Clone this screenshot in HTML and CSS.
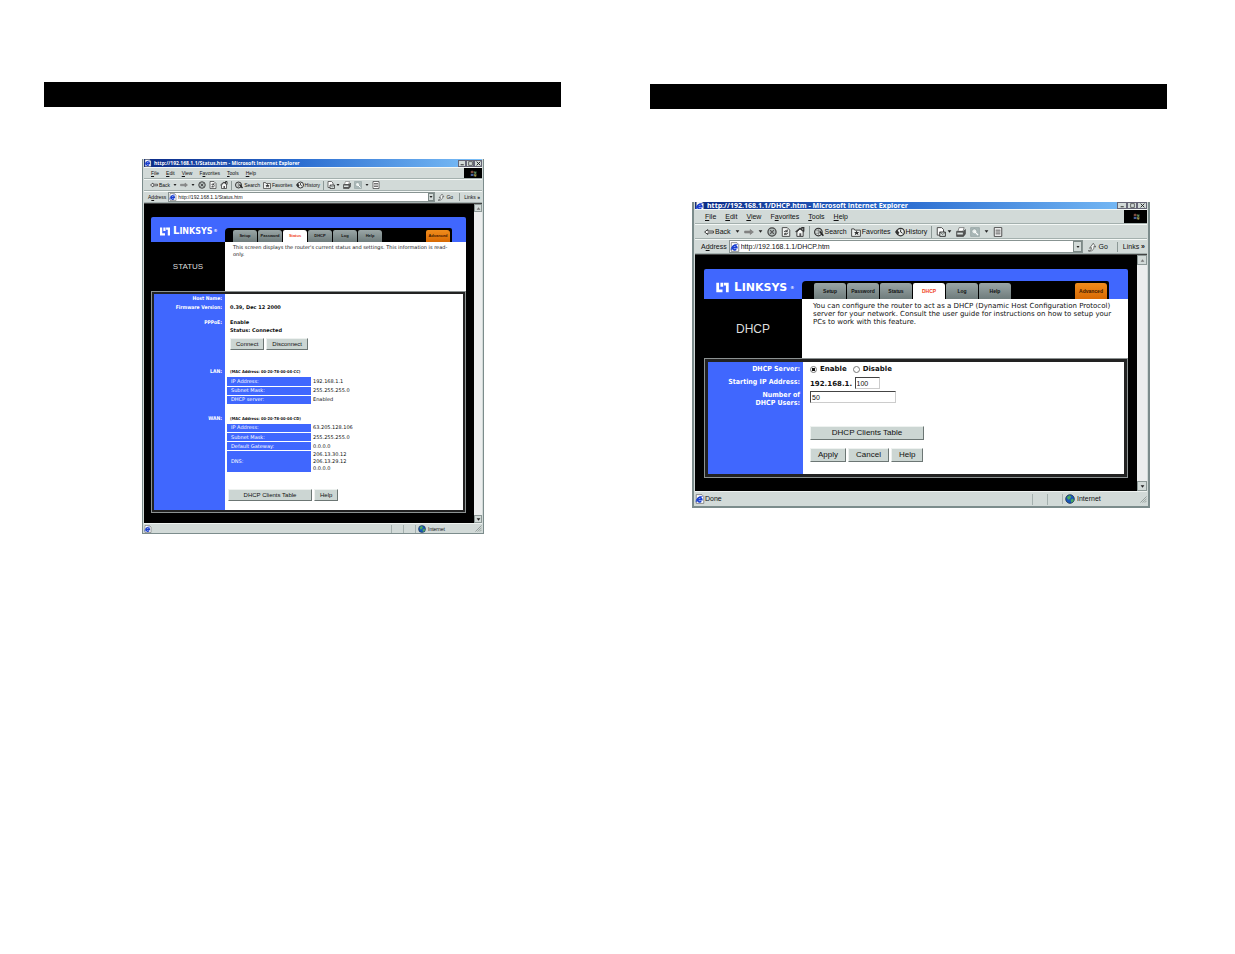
FILE: index.html
```html
<!DOCTYPE html>
<html lang="en">
  <head>
    <meta charset="UTF-8" />
    <meta name="viewport" content="width=device-width, initial-scale=1.0" />
    <title>Linksys Router - Status and DHCP</title>
    <link rel="stylesheet" href="styles.css">
  </head>
  <body>
    <svg class="sprite" aria-hidden="true">
      <symbol id="i-ie" viewBox="0 0 16 16">
        <path d="M2 1h9l3 3v11H2z" fill="#fff" stroke="#555" />
        <path d="M4 9h7a3.5 3.5 0 1 0-1 2.6" fill="none" stroke="#1a3fd0" stroke-width="2.5" />
        <path d="M2 13C1 8 7 3 12 4" fill="none" stroke="#1a3fd0" stroke-width="1.5" />
      </symbol>
      <symbol id="i-back" viewBox="0 0 16 16"><path d="M1 8l5-4v2.5h9v3H6V12z" fill="#fff" stroke="#333" stroke-width="1.5" /></symbol>
      <symbol id="i-forward" viewBox="0 0 16 16"><path d="M15 8l-5-4v2.5H1v3h9V12z" fill="#888" stroke="#777" /></symbol>
      <symbol id="i-stop" viewBox="0 0 16 16">
        <circle cx="8" cy="8" r="6.5" fill="#b4bebc" stroke="#444" stroke-width="2" />
        <path d="M5 5l6 6M11 5l-6 6" stroke="#555" stroke-width="2" />
      </symbol>
      <symbol id="i-refresh" viewBox="0 0 16 16">
        <path d="M2 1h8l4 4v10H2z" fill="#f4f6f5" stroke="#444" stroke-width="1.5" />
        <path d="M5 8a3 3 0 0 1 5-1M11 9a3 3 0 0 1-5 2M10 4v3H7M6 13v-3h3" fill="none" stroke="#333" stroke-width="1.5" />
      </symbol>
      <symbol id="i-home" viewBox="0 0 16 16">
        <path d="M1 8l7-6 6 6M11 4V1h3v6" fill="none" stroke="#333" stroke-width="2" />
        <path d="M3 8v7h10V7L8 3z" fill="#f4f6f5" stroke="#333" stroke-width="1.5" /><path d="M7 10h3v5H7z" fill="#555" />
      </symbol>
      <symbol id="i-search" viewBox="0 0 16 16">
        <circle cx="7" cy="8" r="6" fill="#dfe6e4" stroke="#333" stroke-width="2" />
        <path d="M3 6h8M3 10h6M7 2v12" stroke="#666" /><path d="M9 7l6 7" stroke="#222" stroke-width="2.5" />
      </symbol>
      <symbol id="i-favorites" viewBox="0 0 16 16">
        <path d="M1 3h4l1 2h9v10H1z" fill="#eef1f0" stroke="#444" stroke-width="1.5" />
        <path d="M9 5l1 3h3l-2 2 1 3-3-2-3 2 1-3-2-2h3z" fill="#333" />
      </symbol>
      <symbol id="i-history" viewBox="0 0 16 16">
        <circle cx="9" cy="8" r="6" fill="#eef1f0" stroke="#333" stroke-width="2" />
        <path d="M9 4v4l3 2" fill="none" stroke="#222" stroke-width="1.5" /><path d="M0 8l3-4 4 5-3 4z" fill="#333" />
      </symbol>
      <symbol id="i-mail" viewBox="0 0 16 16">
        <path d="M2 1h7l3 3v9H2z" fill="#fff" stroke="#444" stroke-width="1.5" />
        <path d="M6 8h9v7H6z" fill="#d8e0de" stroke="#333" stroke-width="1.5" /><path d="M6 8l5 4 4-4" fill="none" stroke="#333" />
      </symbol>
      <symbol id="i-print" viewBox="0 0 16 16">
        <path d="M5 1h8l-2 6H3z" fill="#fff" stroke="#555" />
        <path d="M1 7h11l3-3v7l-3 4H1z" fill="#555" stroke="#333" /><path d="M2 9h9v3H2z" fill="#d8e0de" />
      </symbol>
      <symbol id="i-edit" viewBox="0 0 16 16">
        <path d="M1 1h14v14H1z" fill="#aab8b8" stroke="#8a9898" />
        <circle cx="7" cy="7" r="4" fill="#e8eeec" stroke="#849494" /><path d="M7 7l6 6" stroke="#fff" stroke-width="2" />
      </symbol>
      <symbol id="i-discuss" viewBox="0 0 16 16">
        <path d="M2 1h12v14H2z" fill="#fff" stroke="#444" stroke-width="1.5" />
        <path d="M4 5h8M4 8h8M4 11h8" stroke="#444" stroke-width="1.5" />
      </symbol>
      <symbol id="i-go" viewBox="0 0 16 16">
        <path d="M2 14c2 1 6-1 5-5l-3 1 6-8 4 6-3-1c1 6-5 9-9 7z" fill="#f4f6f5" stroke="#333" />
      </symbol>
      <symbol id="i-globe" viewBox="0 0 16 16">
        <circle cx="8" cy="8" r="7" fill="#1a56b8" stroke="#123" />
        <path d="M3 5l4-3 3 2-2 4-3 1zM9 9l4-2 1 4-4 3z" fill="#4aa85c" />
      </symbol>
      <symbol id="i-flag" viewBox="0 0 20 16">
        <path d="M6 4c2-1 3-1 5 0v4c-2-1-3-1-5 0z" fill="#7d4a3c" /><path d="M12 4c2 1 3 1 4 0v4c-1 1-2 1-4 0z" fill="#5f8a5c" />
        <path d="M6 9c2-1 3-1 5 0v4c-2-1-3-1-5 0z" fill="#48639c" /><path d="M12 9c2 1 3 1 4 0v4c-1 1-2 1-4 0z" fill="#9c9448" />
      </symbol>
      <symbol id="i-linksys" viewBox="0 0 18 16">
        <path d="M0 1h4v10h5v4H0zM6 1h4v6H6zM11 1h7v14h-4V5h-3z" fill="#fff" />
      </symbol>
      <symbol id="i-down" viewBox="0 0 8 8"><path d="M1 2h6L4 6z" fill="#222" /></symbol>
      <symbol id="i-up" viewBox="0 0 8 8"><path d="M1 6h6L4 2z" fill="#777" /></symbol>
      <symbol id="i-grip" viewBox="0 0 16 16"><path d="M15 1L1 15M15 6l-9 9M15 11l-4 4" stroke="#77827f" stroke-width="1.5" /></symbol>
      <symbol id="i-min" viewBox="0 0 8 8"><path d="M1 6h5" stroke="#222" stroke-width="1.5" /></symbol>
      <symbol id="i-max" viewBox="0 0 8 8"><path d="M1 1h6v6H1z" fill="none" stroke="#222" /></symbol>
      <symbol id="i-close" viewBox="0 0 8 8"><path d="M1 1l6 6M7 1L1 7" stroke="#222" stroke-width="1.5" /></symbol>
    </svg>

    <main class="spread">
      <section class="sheet">
        <div class="sheet-bar"></div>

        <div class="browser browser-status">
          <div class="title-bar">
            <svg class="icon"><use href="#i-ie" /></svg>
            <span class="title">http://192.168.1.1/Status.htm - Microsoft Internet Explorer</span>
            <button class="win-button" aria-label="Minimize"><svg><use href="#i-min" /></svg></button>
            <button class="win-button" aria-label="Maximize"><svg><use href="#i-max" /></svg></button>
            <button class="win-button" aria-label="Close"><svg><use href="#i-close" /></svg></button>
          </div>
          <div class="menu-bar">
            <button><u>F</u>ile</button>
            <button><u>E</u>dit</button>
            <button><u>V</u>iew</button>
            <button>F<u>a</u>vorites</button>
            <button><u>T</u>ools</button>
            <button><u>H</u>elp</button>
            <span class="throbber"><svg><use href="#i-flag" /></svg></span>
          </div>
          <div class="tool-bar">
            <button><svg class="icon"><use href="#i-back" /></svg>Back</button>
            <svg class="arrow"><use href="#i-down" /></svg>
            <button aria-label="Forward"><svg class="icon"><use href="#i-forward" /></svg></button>
            <svg class="arrow"><use href="#i-down" /></svg>
            <button aria-label="Stop"><svg class="icon"><use href="#i-stop" /></svg></button>
            <button aria-label="Refresh"><svg class="icon"><use href="#i-refresh" /></svg></button>
            <button aria-label="Home"><svg class="icon"><use href="#i-home" /></svg></button>
            <span class="divider"></span>
            <button><svg class="icon"><use href="#i-search" /></svg>Search</button>
            <button><svg class="icon"><use href="#i-favorites" /></svg>Favorites</button>
            <button><svg class="icon"><use href="#i-history" /></svg>History</button>
            <span class="divider"></span>
            <button aria-label="Mail"><svg class="icon"><use href="#i-mail" /></svg><svg class="arrow"><use href="#i-down" /></svg></button>
            <button aria-label="Print"><svg class="icon"><use href="#i-print" /></svg></button>
            <button aria-label="Edit"><svg class="icon"><use href="#i-edit" /></svg></button>
            <svg class="arrow"><use href="#i-down" /></svg>
            <button aria-label="Discuss"><svg class="icon"><use href="#i-discuss" /></svg></button>
          </div>
          <div class="address-bar">
            <label for="statusUrl">A<u>d</u>dress</label>
            <div class="address-box">
              <svg class="icon"><use href="#i-ie" /></svg>
              <input type="text" id="statusUrl" value="http://192.168.1.1/Status.htm" />
              <button class="drop" aria-label="Show addresses"><svg><use href="#i-down" /></svg></button>
            </div>
            <button class="go"><svg class="icon"><use href="#i-go" /></svg>Go</button>
            <span class="links">Links <b>»</b></span>
          </div>

          <div class="viewport">
            <div class="page">
              <header class="banner">
                <div class="brand"><svg><use href="#i-linksys" /></svg><span>L<small>INKSYS</small></span><sup>®</sup></div>
                <nav class="tabs">
                  <a href="#">Setup</a>
                  <a href="#">Password</a>
                  <a href="#" class="active">Status</a>
                  <a href="#">DHCP</a>
                  <a href="#">Log</a>
                  <a href="#">Help</a>
                  <a href="#" class="advanced">Advanced</a>
                </nav>
              </header>
              <div class="intro">
                <h1>STATUS</h1>
                <p>This screen displays the router's current status and settings. This information is read-only.</p>
              </div>
              <div class="panel">
                <div class="row">
                  <div class="name">Host Name:</div>
                  <div class="value"></div>
                </div>
                <div class="row row-firmware">
                  <div class="name">Firmware Version:</div>
                  <div class="value">0.39, Dec 12 2000</div>
                </div>
                <div class="row row-pppoe">
                  <div class="name">PPPoE:</div>
                  <div class="value">
                    <div>Enable</div>
                    <div>Status: Connected</div>
                    <div class="actions"><button>Connect</button><button>Disconnect</button></div>
                  </div>
                </div>
                <div class="row row-lan">
                  <div class="name">LAN:</div>
                  <div class="value">
                    <div class="mac">(MAC Address: 00-20-78-00-04-CC)</div>
                    <table>
                      <tr><th scope="row">IP Address:</th><td>192.168.1.1</td></tr>
                      <tr><th scope="row">Subnet Mask:</th><td>255.255.255.0</td></tr>
                      <tr><th scope="row">DHCP server:</th><td>Enabled</td></tr>
                    </table>
                  </div>
                </div>
                <div class="row row-wan">
                  <div class="name">WAN:</div>
                  <div class="value">
                    <div class="mac">(MAC Address: 00-20-78-00-04-CD)</div>
                    <table>
                      <tr><th scope="row">IP Address:</th><td>63.205.128.106</td></tr>
                      <tr><th scope="row">Subnet Mask:</th><td>255.255.255.0</td></tr>
                      <tr><th scope="row">Default Gateway:</th><td>0.0.0.0</td></tr>
                      <tr><th scope="row">DNS:</th><td>206.13.30.12<br>206.13.29.12<br>0.0.0.0</td></tr>
                    </table>
                  </div>
                </div>
                <div class="row row-buttons">
                  <div class="name"></div>
                  <div class="value">
                    <div class="actions"><button class="wide">DHCP Clients Table</button><button>Help</button></div>
                  </div>
                </div>
              </div>
            </div>
            <div class="scrollbar">
              <button aria-label="Scroll up"><svg><use href="#i-up" /></svg></button>
              <button aria-label="Scroll down"><svg><use href="#i-down" /></svg></button>
            </div>
          </div>

          <div class="status-bar">
            <svg class="icon"><use href="#i-ie" /></svg>
            <span class="message"></span>
            <span class="cell"></span>
            <span class="cell"></span>
            <span class="zone"><svg class="icon"><use href="#i-globe" /></svg>Internet</span>
            <svg class="grip"><use href="#i-grip" /></svg>
          </div>
        </div>
      </section>

      <section class="sheet sheet-right">
        <div class="sheet-bar"></div>

        <div class="browser browser-dhcp">
          <div class="title-bar">
            <svg class="icon"><use href="#i-ie" /></svg>
            <span class="title">http://192.168.1.1/DHCP.htm - Microsoft Internet Explorer</span>
            <button class="win-button" aria-label="Minimize"><svg><use href="#i-min" /></svg></button>
            <button class="win-button" aria-label="Maximize"><svg><use href="#i-max" /></svg></button>
            <button class="win-button" aria-label="Close"><svg><use href="#i-close" /></svg></button>
          </div>
          <div class="menu-bar">
            <button><u>F</u>ile</button>
            <button><u>E</u>dit</button>
            <button><u>V</u>iew</button>
            <button>F<u>a</u>vorites</button>
            <button><u>T</u>ools</button>
            <button><u>H</u>elp</button>
            <span class="throbber"><svg><use href="#i-flag" /></svg></span>
          </div>
          <div class="tool-bar">
            <button><svg class="icon"><use href="#i-back" /></svg>Back</button>
            <svg class="arrow"><use href="#i-down" /></svg>
            <button aria-label="Forward"><svg class="icon"><use href="#i-forward" /></svg></button>
            <svg class="arrow"><use href="#i-down" /></svg>
            <button aria-label="Stop"><svg class="icon"><use href="#i-stop" /></svg></button>
            <button aria-label="Refresh"><svg class="icon"><use href="#i-refresh" /></svg></button>
            <button aria-label="Home"><svg class="icon"><use href="#i-home" /></svg></button>
            <span class="divider"></span>
            <button><svg class="icon"><use href="#i-search" /></svg>Search</button>
            <button><svg class="icon"><use href="#i-favorites" /></svg>Favorites</button>
            <button><svg class="icon"><use href="#i-history" /></svg>History</button>
            <span class="divider"></span>
            <button aria-label="Mail"><svg class="icon"><use href="#i-mail" /></svg><svg class="arrow"><use href="#i-down" /></svg></button>
            <button aria-label="Print"><svg class="icon"><use href="#i-print" /></svg></button>
            <button aria-label="Edit"><svg class="icon"><use href="#i-edit" /></svg></button>
            <svg class="arrow"><use href="#i-down" /></svg>
            <button aria-label="Discuss"><svg class="icon"><use href="#i-discuss" /></svg></button>
          </div>
          <div class="address-bar">
            <label for="dhcpUrl">A<u>d</u>dress</label>
            <div class="address-box">
              <svg class="icon"><use href="#i-ie" /></svg>
              <input type="text" id="dhcpUrl" value="http://192.168.1.1/DHCP.htm" />
              <button class="drop" aria-label="Show addresses"><svg><use href="#i-down" /></svg></button>
            </div>
            <button class="go"><svg class="icon"><use href="#i-go" /></svg>Go</button>
            <span class="links">Links <b>»</b></span>
          </div>

          <div class="viewport">
            <div class="page">
              <header class="banner">
                <div class="brand"><svg><use href="#i-linksys" /></svg><span>L<small>INKSYS</small></span><sup>®</sup></div>
                <nav class="tabs">
                  <a href="#">Setup</a>
                  <a href="#">Password</a>
                  <a href="#">Status</a>
                  <a href="#" class="active">DHCP</a>
                  <a href="#">Log</a>
                  <a href="#">Help</a>
                  <a href="#" class="advanced">Advanced</a>
                </nav>
              </header>
              <div class="intro">
                <h1>DHCP</h1>
                <p>You can configure the router to act as a DHCP (Dynamic Host Configuration Protocol) server for your network. Consult the user guide for instructions on how to setup your PCs to work with this feature.</p>
              </div>
              <form class="panel">
                <div class="row row-server">
                  <div class="name">DHCP Server:</div>
                  <div class="value radios">
                    <input type="radio" id="enable" name="dhcp" checked /><label for="enable">Enable</label>
                    <input type="radio" id="disable" name="dhcp" /><label for="disable">Disable</label>
                  </div>
                </div>
                <div class="row row-start">
                  <label class="name" for="startIp">Starting IP Address:</label>
                  <div class="value">192.168.1. <input class="field field-short" type="text" id="startIp" value="100" /></div>
                </div>
                <div class="row row-users">
                  <label class="name" for="users">Number of<br>DHCP Users:</label>
                  <div class="value"><input class="field" type="text" id="users" value="50" /></div>
                </div>
                <div class="row row-buttons">
                  <div class="name"></div>
                  <div class="value">
                    <div class="actions"><button type="button" class="wide">DHCP Clients Table</button></div>
                    <div class="actions"><button type="button">Apply</button><button type="button">Cancel</button><button type="button">Help</button></div>
                  </div>
                </div>
              </form>
            </div>
            <div class="scrollbar">
              <button aria-label="Scroll up"><svg><use href="#i-up" /></svg></button>
              <button aria-label="Scroll down"><svg><use href="#i-down" /></svg></button>
            </div>
          </div>

          <div class="status-bar">
            <svg class="icon"><use href="#i-ie" /></svg>
            <span class="message">Done</span>
            <span class="cell"></span>
            <span class="cell"></span>
            <span class="zone"><svg class="icon"><use href="#i-globe" /></svg>Internet</span>
            <svg class="grip"><use href="#i-grip" /></svg>
          </div>
        </div>
      </section>
    </main>
  </body>
</html>
```

FILE: styles.css
```css
* {
  margin: 0;
  padding: 0;
  box-sizing: border-box;
}

body {
  font-family: 'Liberation Sans', Arial, sans-serif;
  background-color: #fff;
  color: #111;
}
button,
input {
  font: inherit;
  color: inherit;
  background: none;
  border: none;
}
button {
  white-space: nowrap;
}
svg {
  display: block;
  flex: none;
}
.sprite {
  display: none;
}

.spread {
  display: grid;
  grid-template-columns: 1fr 1fr;
  gap: 89px;
  padding: 82px 68px 40px 44px;
}
.sheet-bar {
  height: 25px;
  background-color: #000;
}
.sheet-right {
  padding-top: 2px;
}

/* sizes shared by everything inside a browser window */
.browser-status {
  --text: 5px;
  --line: 8px;
  --icon: 8px;
  --side: 74px;
  --arrow: 4px;
  margin: 52px 77px 0 98px;
}
.browser-dhcp {
  --text: 7px;
  --line: 10px;
  --icon: 10px;
  --side: 98px;
  --arrow: 5px;
  margin: 93px 17px 0 42px;
}
.browser {
  font-size: var(--text);
  line-height: var(--line);
  background-color: #d2dad8;
  border: solid #7c8c8c;
  border-width: 0 1px 1px;
  padding: 0 1px;
}
.icon {
  width: var(--icon);
  height: var(--icon);
}
.arrow {
  width: var(--arrow);
  height: var(--arrow);
}

.title-bar {
  display: flex;
  align-items: center;
  height: 8px;
  overflow: hidden;
  color: #fff;
  font-family: 'Open Sans', sans-serif;
  font-weight: bold;
  background: linear-gradient(90deg, #0c2a86, #2a6cd0 45%, #7cc0f8);
}
.title {
  flex: 1;
  margin-left: 2px;
  white-space: nowrap;
}
.win-button {
  display: grid;
  place-items: center;
  width: 8px;
  height: 7px;
  background-color: #d2dad8;
  border: 1px solid #667;
}
.win-button svg {
  width: 5px;
  height: 5px;
}

.menu-bar,
.tool-bar,
.address-bar {
  display: flex;
  align-items: center;
  border-top: 1px solid #f4f8f6;
  border-bottom: 1px solid #a4b0ae;
}
.menu-bar {
  height: 12px;
  padding-left: 7px;
  gap: 7px;
}
.throbber {
  margin-left: auto;
  align-self: stretch;
  display: grid;
  place-items: center;
  width: 18px;
  background-color: #000;
}
.throbber svg {
  width: 12px;
  height: 9px;
}
.tool-bar {
  height: 12px;
  padding-left: 6px;
  gap: 3px;
}
.tool-bar button {
  display: flex;
  align-items: center;
  gap: 1px;
}
.divider {
  width: 1px;
  height: 9px;
  background-color: #8c9896;
}
.address-bar {
  height: 12px;
  padding-left: 4px;
  gap: 2px;
}
.address-box {
  flex: 1;
  display: flex;
  align-items: center;
  gap: 1px;
  height: 100%;
  background-color: #fff;
  border: 1px solid #889492;
}
.address-box input {
  flex: 1;
  min-width: 0;
}
.drop {
  display: grid;
  place-items: center;
  width: 6px;
  height: 100%;
  background-color: #d2dad8;
  border: 1px solid #7c8886;
}
.drop svg {
  width: 4px;
  height: 4px;
}
.go {
  display: flex;
  align-items: center;
  gap: 1px;
}
.links {
  margin-left: 4px;
  padding: 0 2px 0 4px;
  border-left: 1px solid #8c9896;
}

.viewport {
  display: flex;
  border-top: 1px solid #444;
}
.page {
  flex: 1;
  padding: 13px 8px 10px 7px;
  background-color: #000;
}
.scrollbar {
  display: flex;
  flex-direction: column;
  justify-content: space-between;
  width: 8px;
  background-color: #eceeee;
}
.scrollbar button {
  display: grid;
  place-items: center;
  height: 8px;
  background-color: #d2dad8;
  border: 1px solid #8c9896;
}
.scrollbar svg {
  width: 5px;
  height: 5px;
}

.banner {
  display: flex;
  align-items: flex-end;
  height: 25px;
  padding-right: 14px;
  background-color: #4067fe;
  border-radius: 2px 2px 0 0;
}
.brand {
  display: flex;
  align-items: center;
  align-self: stretch;
  width: var(--side);
  padding: 3px 0 0 9px;
  gap: 3px;
  color: #fff;
  font-size: 10px;
  font-weight: bold;
  font-family: 'DejaVu Sans', sans-serif;
}
.brand svg {
  width: 10px;
  height: 9px;
}
.brand small {
  font-size: 8px;
}
.brand sup {
  font-size: 4px;
  margin-left: -2px;
}
.tabs {
  flex: 1;
  display: flex;
  gap: 1px;
  padding: 2px 2px 0 8px;
  background-color: #000;
  border-radius: 4px 2px 0 0;
}
.tabs a {
  width: 24px;
  height: 12px;
  line-height: 12px;
  text-align: center;
  font-size: 4px;
  font-weight: bold;
  color: #111;
  text-decoration: none;
  background: linear-gradient(#9aa6a6, #6f7c7c);
  border-radius: 2px 3px 0 0;
}
.tabs .active {
  color: #f0431c;
  background: #fff;
}
.tabs .advanced {
  margin-left: auto;
  color: #401800;
  background: linear-gradient(#f08c1c, #d86a04);
}

.intro {
  display: flex;
  height: 49px;
}
.intro h1 {
  display: grid;
  place-items: center;
  width: var(--side);
  font-size: 8px;
  font-weight: normal;
  color: #ddd;
}
.intro p {
  flex: 1;
  padding: 2px 12px 0 8px;
  line-height: 7px;
  background-color: #fff;
  font-family: 'DejaVu Sans', sans-serif;
}

.panel {
  background: linear-gradient(90deg, #4067fe calc(var(--side) - 3px), #fff 0);
  border: 3px solid #222;
  outline: 1px solid #8c9292;
  outline-offset: -1px;
  font-family: 'DejaVu Sans', sans-serif;
}
.row {
  display: grid;
  grid-template-columns: calc(var(--side) - 3px) 1fr;
}
.name {
  padding-right: 3px;
  text-align: right;
  font-family: 'DejaVu Sans Condensed', 'DejaVu Sans', sans-serif;
  font-weight: bold;
  color: #fff;
  white-space: nowrap;
}
.value {
  padding-left: 5px;
  font-weight: bold;
}
.row-firmware {
  padding-top: 1px;
}
.row-pppoe {
  padding-top: 7px;
}
.row-lan {
  padding-top: 17px;
}
.row-wan {
  padding-top: 9px;
}
.mac {
  font-family: 'DejaVu Sans Condensed', 'DejaVu Sans', sans-serif;
  font-size: 4px;
  line-height: 10px;
}
table {
  margin-left: -3px;
  border-collapse: collapse;
  font-weight: normal;
}
th,
td {
  height: 9px;
  line-height: 7px;
  border-bottom: 1px solid #fff;
}
th {
  width: 84px;
  padding-left: 4px;
  text-align: left;
  font-weight: normal;
  color: #fff;
  background-color: #4067fe;
}
td {
  padding-left: 2px;
}
.actions {
  display: flex;
  gap: 2px;
}
.actions button {
  height: 12px;
  padding: 0 5px;
  font-family: 'Liberation Sans', Arial, sans-serif;
  font-size: 6px;
  font-weight: normal;
  background-color: #ccd6d3;
  border: 1px solid;
  border-color: #eef2f0 #6c7674 #6c7674 #eef2f0;
}
.row-pppoe .actions {
  margin-top: 4px;
}
.browser-status .row-buttons {
  padding: 16px 0 9px;
}
.browser-status .row-buttons .value {
  padding-left: 3px;
}
.browser-status .wide {
  width: 84px;
}

.status-bar {
  display: flex;
  align-items: center;
  height: 10px;
  border-top: 1px solid #eef2f0;
}
.message {
  flex: 1;
}
.cell {
  width: 12px;
  height: 8px;
  border-left: 1px solid #a4b0ae;
}
.zone {
  display: flex;
  align-items: center;
  gap: 2px;
  width: 60px;
  padding-left: 2px;
  border-left: 1px solid #a4b0ae;
}
.grip {
  width: 7px;
  height: 7px;
}

/* the DHCP window is drawn a third larger */
.browser-dhcp {
  border-width: 0 2px 2px;
}
.browser-dhcp .title-bar {
  height: 7px;
}
.browser-dhcp .win-button {
  width: 10px;
}
.browser-dhcp .menu-bar {
  height: 15px;
  padding-left: 10px;
  gap: 9px;
}
.browser-dhcp .throbber {
  width: 23px;
}
.browser-dhcp .tool-bar {
  height: 15px;
  padding-left: 9px;
  gap: 4px;
}
.browser-dhcp .divider {
  height: 12px;
}
.browser-dhcp .address-bar {
  height: 15px;
  padding-left: 6px;
}
.browser-dhcp .drop {
  width: 9px;
}
.browser-dhcp .go {
  margin-left: 2px;
}
.browser-dhcp .links {
  margin-left: 7px;
  padding: 0 2px 0 5px;
}
.browser-dhcp .page {
  padding: 14px 9px 13px;
}
.browser-dhcp .scrollbar {
  width: 10px;
}
.browser-dhcp .scrollbar button {
  height: 10px;
}
.browser-dhcp .banner {
  height: 30px;
  padding-right: 19px;
}
.browser-dhcp .brand {
  padding: 7px 0 0 12px;
  gap: 5px;
  font-size: 12px;
}
.browser-dhcp .brand svg {
  width: 13px;
  height: 11px;
}
.browser-dhcp .brand small {
  font-size: 11px;
}
.browser-dhcp .tabs {
  padding: 2px 2px 0 12px;
}
.browser-dhcp .tabs a {
  width: 32px;
  height: 16px;
  line-height: 16px;
  font-size: 5px;
}
.browser-dhcp .intro {
  height: 59px;
}
.browser-dhcp .intro h1 {
  font-size: 12px;
}
.browser-dhcp .intro p {
  padding: 3px 12px 0 11px;
  line-height: 8px;
}
.browser-dhcp .panel {
  border-width: 4px;
}
.browser-dhcp .value {
  padding-left: 7px;
}
.row-server {
  padding-top: 2px;
}
.row-start {
  padding-top: 3px;
}
.row-users {
  padding-top: 2px;
  line-height: 8px;
}
.radios {
  display: flex;
  align-items: center;
  gap: 3px;
}
.radios label {
  margin-right: 3px;
}
.radios input {
  appearance: none;
  width: 7px;
  height: 7px;
  background-color: #fff;
  border: 1px solid #777;
  border-radius: 50%;
}
.radios input:checked {
  background: radial-gradient(#111 40%, #fff 50%);
}
.field {
  display: block;
  width: 86px;
  height: 12px;
  padding-left: 1px;
  font-family: 'Liberation Sans', Arial, sans-serif;
  font-weight: normal;
  background-color: #fff;
  border: 1px solid;
  border-color: #444 #ccc #ccc #444;
}
.field-short {
  display: inline-block;
  width: 25px;
}
.browser-dhcp .row-buttons {
  padding: 19px 0 12px;
}
.browser-dhcp .actions + .actions {
  margin-top: 8px;
}
.browser-dhcp .actions button {
  height: 14px;
  padding: 0 7px;
  font-size: 8px;
}
.browser-dhcp .wide {
  width: 114px;
}
.browser-dhcp .status-bar {
  height: 15px;
}
.browser-dhcp .cell {
  width: 15px;
  height: 11px;
}
.browser-dhcp .zone {
  width: 78px;
}

@media (max-width: 900px) {
  .spread {
    grid-template-columns: 1fr;
    gap: 40px;
    padding: 40px 20px;
  }
  .browser {
    margin: 40px auto 0;
    max-width: 458px;
  }
}
```
